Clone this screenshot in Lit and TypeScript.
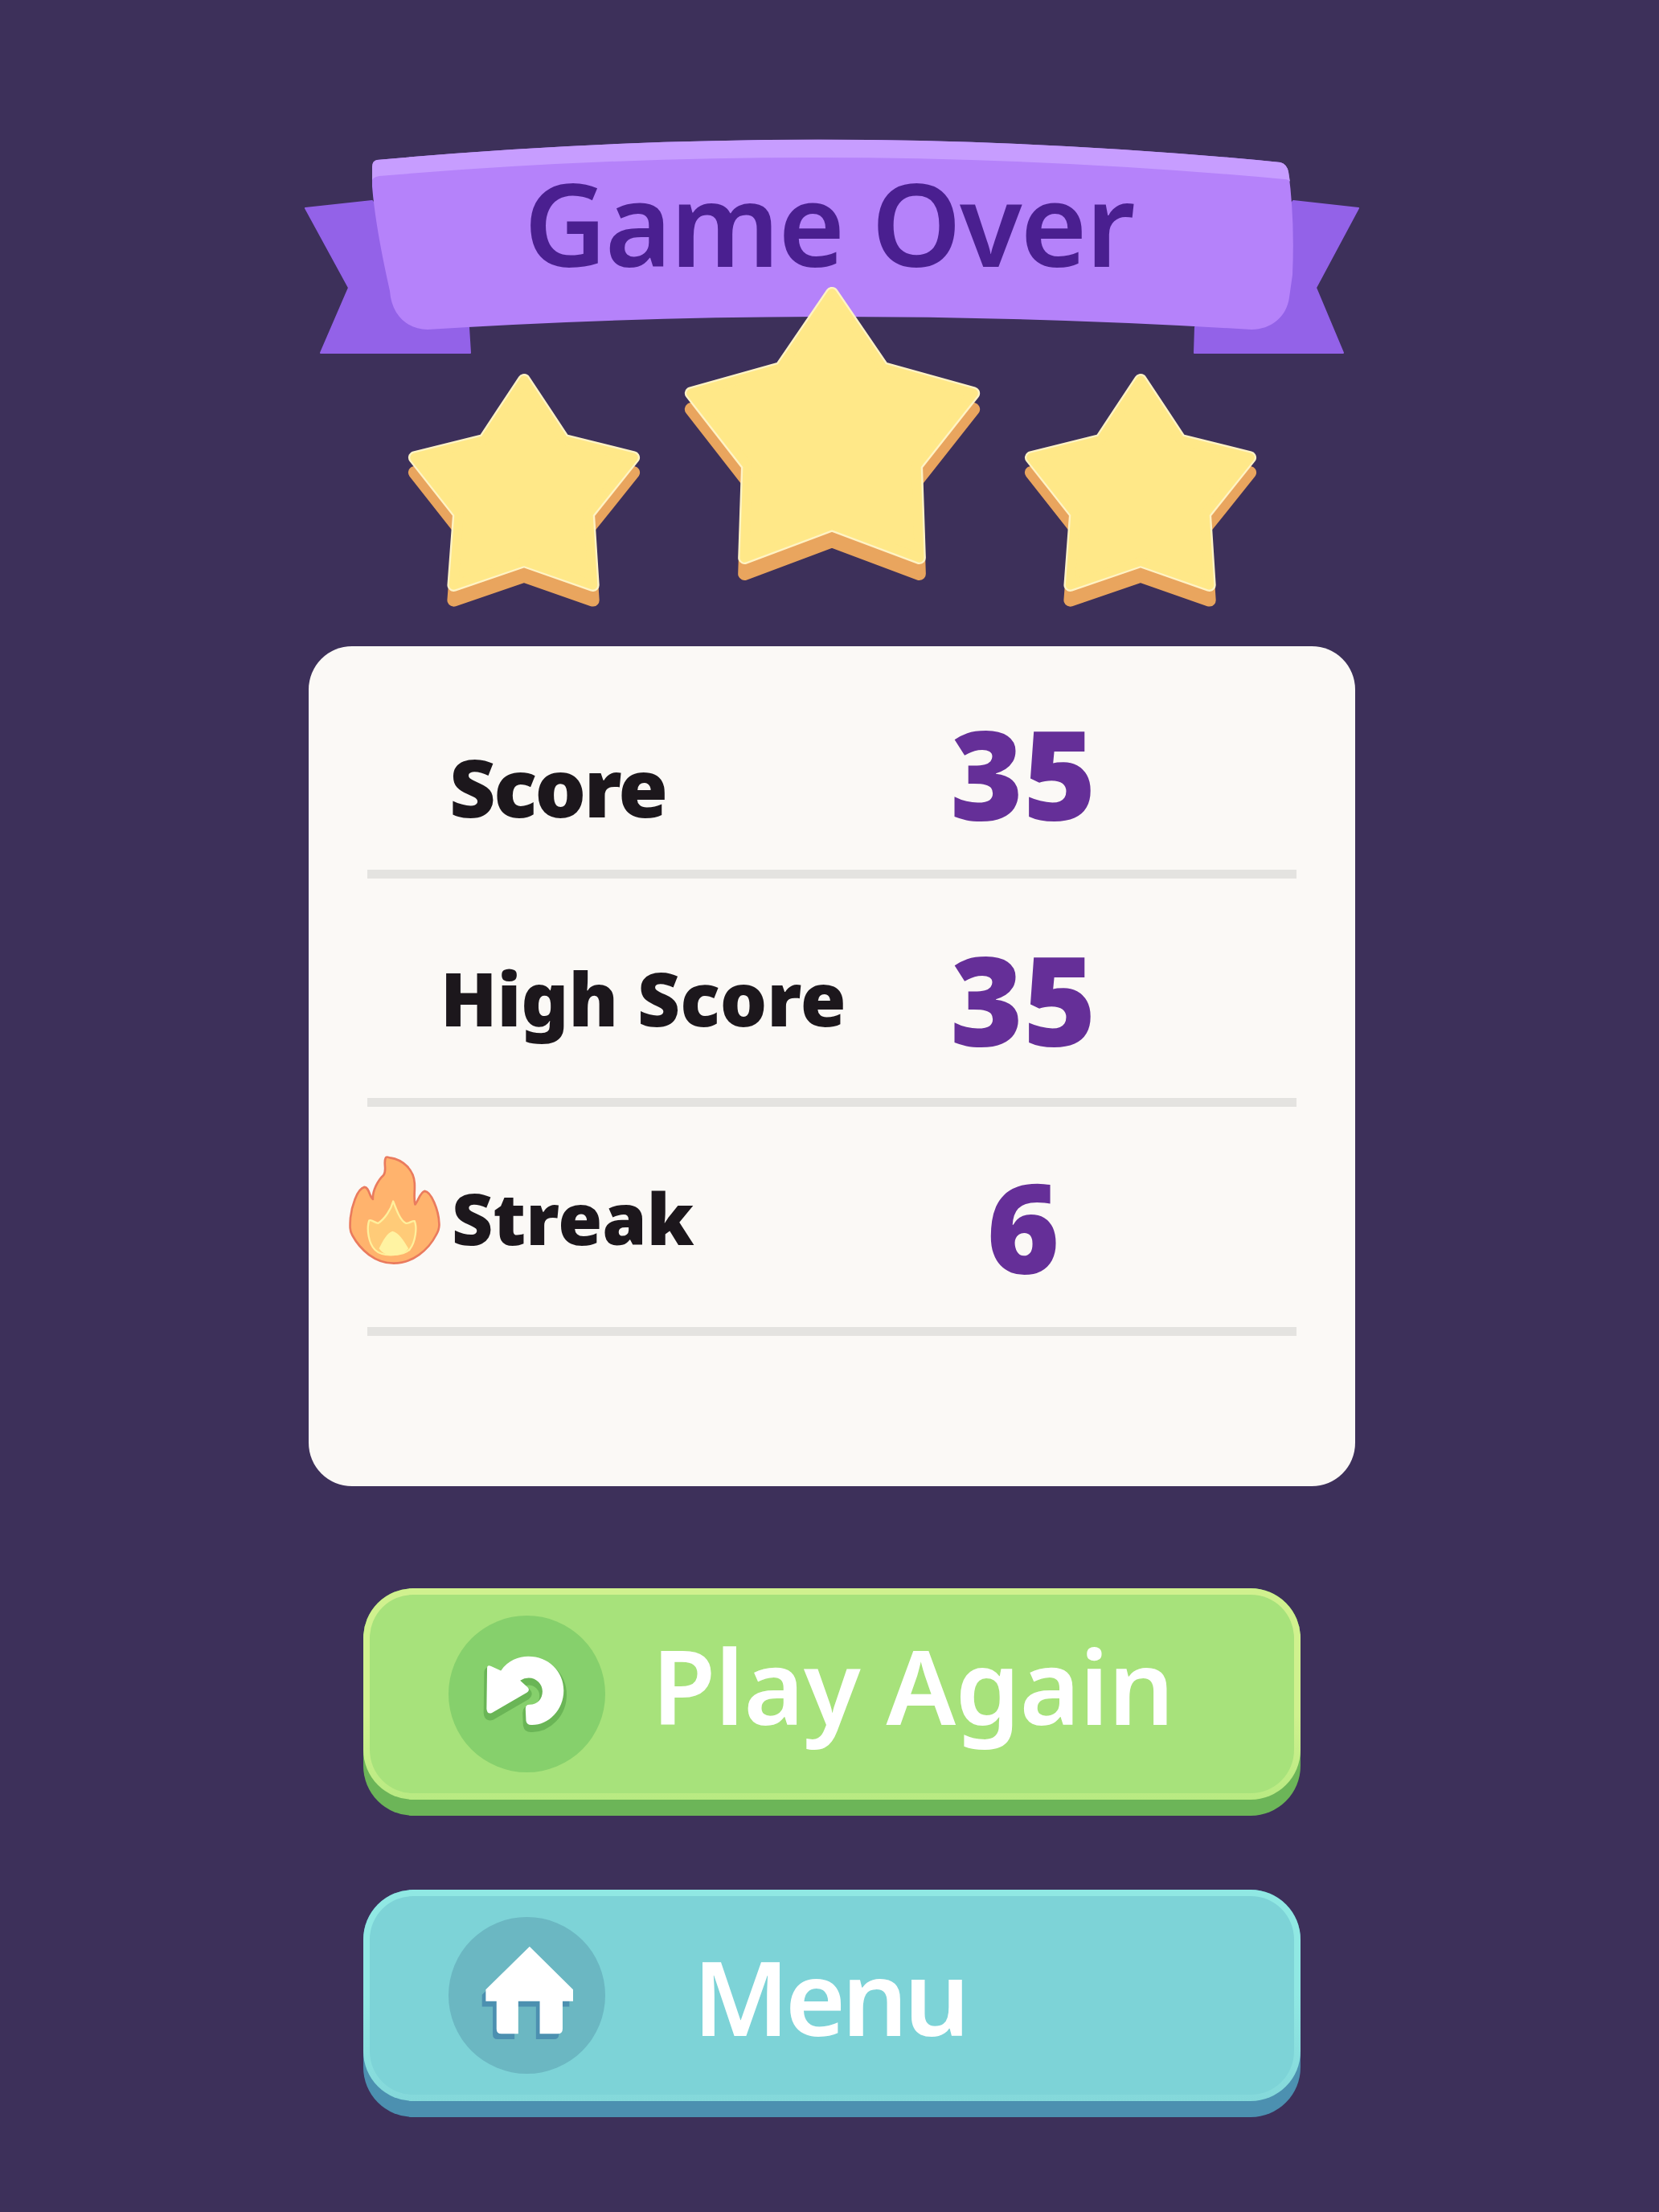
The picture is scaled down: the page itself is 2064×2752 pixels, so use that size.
import { LitElement, css, html, svg } from "lit";
import { customElement } from "lit/decorators.js";

const STAR_BIG = "182,0 248,98 365,131 291,226 295,347 182,304 69,347 73,226 0,131 116,98";
const STAR_SMALL = "143,0 195,80 286,103 227,178 233,273 143,241 51,273 58,178 0,103 91,80";

// star face plus the darker copy under it, tips rounded by the stroke
const starIcon = (points: string, w: number, h: number, drop: number, cls: string) => html`
    <svg class=${cls} width=${w + 8} height=${h + 30} viewBox="-4 -4 ${w + 8} ${h + 30}">
        <g transform="translate(7 7) scale(${(w - 14) / w} ${(h - 18) / h})">
            <polygon points=${points} transform="translate(0 ${drop})" fill="#e9a55e" stroke="#e9a55e" stroke-width="17" stroke-linejoin="round" />
            <polygon points=${points} fill="#fff3c4" stroke="#fff3c4" stroke-width="17" stroke-linejoin="round" />
            <polygon points=${points} fill="#ffe888" stroke="#ffe888" stroke-width="12" stroke-linejoin="round" />
        </g>
    </svg>
`;

const ribbon = svg`
    <path d="M1 87 L84 78 L204 235 L206 267 L20 267 L55 186 Z" fill="#9362e8" stroke="#9362e8" stroke-width="2" stroke-linejoin="round" />
    <path d="M1311 87 L1230 78 L1108 235 L1107 267 L1292 267 L1258 186 Z" fill="#9362e8" stroke="#9362e8" stroke-width="2" stroke-linejoin="round" />
    <path d="M90 27 Q657 -25 1214 30 Q1222 32 1224 42 Q1232 100 1229 170 L1225 198 C1222 222 1202 238 1178 238 Q657 206 153 238 C128 238 108 220 106 190 Q88 110 84 60 L84 36 Q84 28 90 27 Z" fill="#b582fa" />
    <path d="M90 27 Q657 -25 1214 30 Q1222 32 1224 42 L1226 54 Q1224 51 1219 51 Q657 -1 93 47 Q86 48 84 52 L84 36 Q84 28 90 27 Z" fill="#c79dff" />
`;

const flame = html`
    <svg class="flame" width="123" height="142" viewBox="30 90 370 425">
        <path d="M180 105 C182 100 190 104 196 105 C245 112 285 150 288 200 C290 230 284 255 290 280 C300 270 310 232 326 230 C350 232 378 300 380 350 C382 370 376 382 368 395 C340 450 280 500 210 500 C140 500 85 450 55 395 C45 380 46 360 48 330 C52 290 72 222 100 215 C118 214 118 250 132 260 C130 230 150 190 172 170 C186 152 170 125 180 105 Z" fill="#ffb36d" stroke="#ea7b5e" stroke-width="8" stroke-linejoin="round" />
        <path d="M208 268 C220 300 235 340 255 350 C268 352 278 340 288 342 C298 365 292 420 270 448 C250 470 170 480 140 450 C115 425 108 370 118 340 C128 335 140 350 152 350 C175 335 200 300 208 268 Z" fill="#ffcb78" stroke="#fff09c" stroke-width="7" stroke-linejoin="round" />
        <path d="M205 380 C228 384 250 418 265 445 C240 478 180 482 155 445 C168 418 185 386 205 380 Z" fill="#fff3a2" />
    </svg>
`;

const REPLAY_D =
    "M497 350 Q497 335 512 342 L548 358 C575 320 615 305 650 305 C725 305 782 360 782 432 C782 505 725 560 665 560 Q645 562 642 545 L640 500 Q640 485 655 485 C685 485 703 462 703 435 C703 408 680 385 652 385 Q635 385 620 395 L648 420 Q658 430 645 440 L515 515 Q497 522 495 500 Z";

const replayIcon = html`
    <svg width="127" height="127" viewBox="455 255 380 380">
        <path d=${REPLAY_D} transform="translate(0 16)" fill="#6ab556" stroke="#6ab556" stroke-width="22" stroke-linejoin="round" />
        <path d=${REPLAY_D} fill="#fff" />
    </svg>
`;

const HOME_D =
    "M655 248 L817 408 L817 452 L778 452 L778 555 Q778 573 760 573 L693 573 L693 452 L613 452 L613 573 L550 573 Q532 573 532 555 L532 452 L492 452 L492 408 Z";

const homeIcon = html`
    <svg width="127" height="127" viewBox="455 240 380 380">
        <path d=${HOME_D} transform="translate(-14 20)" fill="#4c90b0" />
        <path d=${HOME_D} fill="#fff" />
    </svg>
`;

@customElement("app-root")
class AppRoot extends LitElement {
    static styles = css`
        :host {
            display: block;
            width: 2064px;
            height: 2752px;
            background: #3d305a;
            font-family: "Noto Sans", "Open Sans", sans-serif;
            overflow: hidden;
        }

        .screen {
            display: flex;
            flex-direction: column;
            align-items: center;
            padding: 172px 0 0 6px;
        }

        .banner {
            display: grid;
            width: 1312px;
            height: 268px;
        }

        .banner > * {
            grid-area: 1 / 1;
        }

        .banner h1 {
            margin: 0;
            padding: 40px 8px 0 0;
            text-align: center;
            font-size: 142px;
            line-height: 130px;
            letter-spacing: -2px;
            font-weight: 600;
            color: #4a1f90;
        }

        .stars {
            display: flex;
            width: 1100px;
            height: 410px;
            margin-top: -86px;
            justify-content: center;
            align-items: flex-start;
            position: relative;
        }

        .small {
            margin-top: 108px;
        }

        .star-mid {
            margin: 0 50px;
        }

        .card {
            box-sizing: border-box;
            width: 1302px;
            height: 1045px;
            margin-top: 40px;
            padding: 0 73px;
            background: #fbf9f6;
            border-radius: 54px;
        }

        .row {
            display: grid;
            grid-template-columns: 640px 352px;
            align-items: center;
            border-bottom: 11px solid #e4e3e0;
            box-sizing: border-box;
        }

        .row.first {
            height: 289px;
        }

        .row.second {
            height: 284px;
        }

        .row.third {
            height: 285px;
        }

        .label {
            display: flex;
            align-items: center;
            line-height: 120px;
            font-weight: 900;
            color: #1c171c;
        }

        .first .label {
            font-size: 100px;
            letter-spacing: -2.5px;
            padding: 70px 0 0 102px;
        }

        .second .label {
            font-size: 92px;
            padding: 24px 0 0 91px;
        }

        .third .label {
            font-size: 89px;
            margin-left: -27px;
            padding-top: 2px;
        }

        .flame {
            margin: -18px 9px 0 0;
        }

        .value {
            text-align: center;
            font-size: 155px;
            line-height: 160px;
            font-weight: 900;
            color: #652f98;
        }

        .first .value {
            padding-top: 34px;
        }

        .second .value {
            padding-top: 22px;
        }

        .third .value {
            padding-top: 20px;
        }

        .btn {
            box-sizing: border-box;
            width: 1166px;
            height: 283px;
            margin-top: 92px;
            padding-bottom: 20px;
            border-radius: 62px;
            color: #fff;
            font-size: 129px;
            letter-spacing: -0.8px;
            font-weight: 600;
        }

        .card + .btn {
            margin-top: 127px;
        }

        .face {
            box-sizing: border-box;
            display: flex;
            align-items: center;
            height: 263px;
            padding: 0 98px;
            border: 8px solid transparent;
            border-radius: 62px;
        }

        .play {
            background: #6cb558;
        }

        .play .face {
            background: linear-gradient(#a7e27b, #a7e27b) padding-box, linear-gradient(#d0f18e 60%, #b8ea82) border-box;
        }

        .menu {
            background: #4c90b0;
        }

        .menu .face {
            background: linear-gradient(#7dd3d7, #7dd3d7) padding-box, linear-gradient(#90e8e3 50%, #84d8da) border-box;
        }

        .disc {
            flex: none;
            display: grid;
            place-items: center;
            width: 195px;
            height: 195px;
            border-radius: 50%;
        }

        .play .disc {
            background: #86d06c;
        }

        .menu .disc {
            background: #6bb7c2;
        }

        .play span {
            margin-left: 58px;
            padding-bottom: 24px;
        }

        .menu span {
            margin-left: 109px;
            letter-spacing: -5px;
        }
    `;

    protected render() {
        return html`
            <div class="screen">
                <div class="banner">
                    <svg width="1312" height="268" viewBox="0 0 1312 268">${ribbon}</svg>
                    <h1>Game Over</h1>
                </div>
                <div class="stars">
                    ${starIcon(STAR_SMALL, 286, 273, 20, "small")}
                    <div class="star-mid">${starIcon(STAR_BIG, 365, 347, 21, "big")}</div>
                    ${starIcon(STAR_SMALL, 286, 273, 20, "small")}
                </div>
                <div class="card">
                    <div class="row first">
                        <div class="label">Score</div>
                        <div class="value">35</div>
                    </div>
                    <div class="row second">
                        <div class="label">High Score</div>
                        <div class="value">35</div>
                    </div>
                    <div class="row third">
                        <div class="label">${flame}Streak</div>
                        <div class="value">6</div>
                    </div>
                </div>
                <div class="btn play">
                    <div class="face">
                        <div class="disc">${replayIcon}</div>
                        <span>Play Again</span>
                    </div>
                </div>
                <div class="btn menu">
                    <div class="face">
                        <div class="disc">${homeIcon}</div>
                        <span>Menu</span>
                    </div>
                </div>
            </div>
        `;
    }
}

declare global {
    interface HTMLElementTagNameMap {
        "app-root": AppRoot;
    }
}
